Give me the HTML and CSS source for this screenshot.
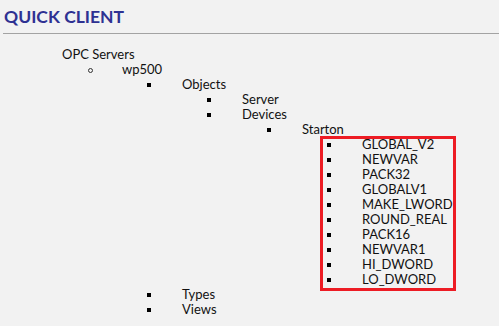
FILE: index.html
```html
<!DOCTYPE html>
<html lang="en">
<head>
  <meta charset="UTF-8">
  <title>Quick Client</title>
  <link rel="stylesheet" href="styles.css">
</head>
<body>
  <div class="header">
    <div class="title">QUICK CLIENT</div>
  </div>

  <ul class="tree root">
    <li class="plain">OPC Servers
      <ul class="tree">
        <li class="circle">wp500
          <ul class="tree">
            <li>Objects
              <ul class="tree">
                <li>Server</li>
                <li>Devices
                  <ul class="tree">
                    <li>Starton
                      <!-- highlighted variables -->
                      <ul class="tree marked">
                        <li>GLOBAL_V2</li>
                        <li>NEWVAR</li>
                        <li>PACK32</li>
                        <li>GLOBALV1</li>
                        <li>MAKE_LWORD</li>
                        <li>ROUND_REAL</li>
                        <li>PACK16</li>
                        <li>NEWVAR1</li>
                        <li>HI_DWORD</li>
                        <li>LO_DWORD</li>
                      </ul>
                    </li>
                  </ul>
                </li>
              </ul>
            </li>
            <li>Types</li>
            <li>Views</li>
          </ul>
        </li>
      </ul>
    </li>
  </ul>
</body>
</html>
```

FILE: styles.css
```css
* {
  margin: 0;
  padding: 0;
  box-sizing: border-box;
}

body {
  width: 499px;
  min-height: 326px;
  background: #f2f2f2;
  font-family: Lato, "Open Sans", sans-serif;
  font-size: 13px;
  color: #111;
}

.header {
  margin-left: 3px;
  padding: 7px 0 6px 1px;
  border-bottom: 1px solid #a3a3a3;
}

.title {
  font-size: 17.5px;
  font-weight: bold;
  color: #2e3192;
  line-height: 20px;
}

.tree {
  list-style: none;
  padding-left: 60px;
}

.tree.root {
  margin-top: 13px;
  padding-left: 62px;
}

.tree li {
  position: relative;
  line-height: 15px;
}

.tree li::before {
  content: "";
  position: absolute;
  left: -35px;
  top: 6px;
  width: 4px;
  height: 4px;
  background: #000;
}

.tree li.plain::before {
  display: none;
}

.tree li.circle::before {
  box-sizing: border-box;
  left: -34px;
  top: 6px;
  width: 5px;
  height: 5px;
  background: none;
  border: 1px solid #333;
  border-radius: 50%;
}

.tree.marked {
  position: relative;
  margin-left: 20px;
  padding-left: 40px;
}

/* red highlight frame drawn over the list */
.tree.marked::after {
  content: "";
  box-sizing: border-box;
  position: absolute;
  left: -2px;
  top: -1px;
  width: 136px;
  height: 155px;
  border: 3px solid #ed1c24;
  pointer-events: none;
}
```
